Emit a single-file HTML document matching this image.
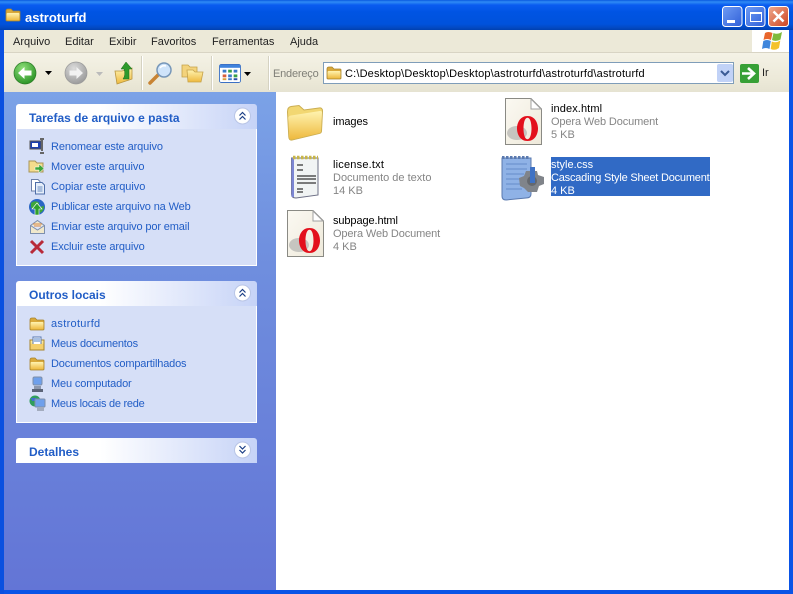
<!DOCTYPE html>
<html><head><meta charset="utf-8"><style>
html,body{margin:0;padding:0;width:793px;height:594px;overflow:hidden;background:#fff}
body{position:relative;font-family:"Liberation Sans",sans-serif;font-size:11px}
div,span{position:absolute;white-space:nowrap}
svg{position:absolute;overflow:visible}
.m{top:36px;color:#222;font-size:11px;line-height:13px}
.l{left:51px;color:#215dc6;line-height:13px;letter-spacing:-.12px}
.h{left:16px;width:241px;height:25px;background:linear-gradient(90deg,#fff 0,#fff 35%,#c6d3f7 100%);border-radius:3px 3px 0 0}
.b{left:16px;width:239px;background:#d6dff7;border:1px solid #fff;border-top:0}
.ht{left:29px;color:#215dc6;font-weight:bold;font-size:12px;line-height:14px}
.sep{width:1px;top:56px;height:34px;background:#d5d2c2;border-right:1px solid #fff}
.f{left:0;color:#000;line-height:13px}
.g{color:#858585}
</style></head><body>
<svg width="0" height="0" style="position:absolute"><defs>
<linearGradient id="fy" x1="0" y1="0" x2="0" y2="1"><stop offset="0" stop-color="#fff3b0"/><stop offset="1" stop-color="#eeb93e"/></linearGradient>
<linearGradient id="opb" x1="0" y1="0" x2="1" y2="1"><stop offset="0" stop-color="#fbf9f2"/><stop offset="1" stop-color="#eee9da"/></linearGradient>
<radialGradient id="gb" cx=".4" cy=".3" r=".8"><stop offset="0" stop-color="#8fe07a"/><stop offset="1" stop-color="#1f8a1c"/></radialGradient>
<radialGradient id="gg" cx=".4" cy=".3" r=".8"><stop offset="0" stop-color="#dcdcdc"/><stop offset="1" stop-color="#939393"/></radialGradient>
<symbol id="sf" viewBox="0 0 16 14"><path d="M1 3Q1 1 3 1H6L8 3H14Q15 3 15 4V12Q15 13 14 13H2Q1 13 1 12Z" fill="#d9a93b" stroke="#a8842c" stroke-width=".8"/><rect x="1.500" y="5" width="13" height="7.500" rx="1" fill="url(#fy)"/></symbol>
<symbol id="op" viewBox="0 0 37 47"><path d="M.5.5H26L36.5 11V46.500H.5Z" fill="url(#opb)" stroke="#8a8a84"/><path d="M26 1V11H36Z" fill="#fff" stroke="#a0a0a0"/><ellipse cx="12" cy="35" rx="10" ry="7" fill="#c6c5c0"/><path fill-rule="evenodd" d="M22.500 18C15 18 12 25 12 30.500S15 43 22.500 43S33 36 33 30.500S30 18 22.500 18ZM22.500 19.800C25.500 19.800 26.500 26 26.500 30.500S25.500 41.200 22.500 41.200S18.500 35 18.500 30.500S19.500 19.800 22.500 19.800Z" fill="#e3101c"/></symbol>
</defs></svg>

<!-- window frame -->
<div style="left:0;top:0;width:793px;height:594px;background:#0a54e6"></div>
<div style="left:0;top:0;width:793px;height:30px;background:linear-gradient(180deg,#0a5ae0 0,#2f8bf5 2px,#0a5cf0 5px,#0054e3 12px,#0052dc 24px,#0348c0 28px,#0040b0 30px)"></div>
<div style="left:0;top:30px;width:4px;height:564px;background:#0a50e0"></div>
<svg style="left:5px;top:8px" width="16" height="14"><use href="#sf" width="16" height="14"/></svg>
<div style="left:25px;top:10px;color:#fff;font-weight:bold;font-size:13px;line-height:15px">astroturfd</div>

<!-- window buttons -->
<svg style="left:722px;top:6px" width="67" height="21">
<defs><linearGradient id="wb" x1="0" y1="0" x2="1" y2="1"><stop offset="0" stop-color="#6f9cf4"/><stop offset="1" stop-color="#2f5fd8"/></linearGradient>
<linearGradient id="wr" x1="0" y1="0" x2="1" y2="1"><stop offset="0" stop-color="#eea98e"/><stop offset="1" stop-color="#cf4420"/></linearGradient></defs>
<rect x=".5" y=".5" width="19.500" height="20" rx="3" fill="url(#wb)" stroke="#fff"/>
<rect x="5" y="14" width="8" height="3" fill="#fff"/>
<rect x="23.500" y=".5" width="19.500" height="20" rx="3" fill="url(#wb)" stroke="#fff"/>
<rect x="28.500" y="6.500" width="11" height="9" fill="none" stroke="#fff"/><rect x="28" y="6" width="12" height="2" fill="#fff"/>
<rect x="46.500" y=".5" width="20" height="20" rx="3" fill="url(#wr)" stroke="#fff"/>
<path d="M51.500 5.500L61.500 15.500M61.500 5.500L51.500 15.500" stroke="#fff" stroke-width="2.500"/>
</svg>

<!-- menu bar -->
<div style="left:4px;top:30px;width:785px;height:23px;background:#ece9d8"></div>
<div style="left:4px;top:52px;width:785px;height:1px;background:#d8d4c4"></div>
<div class="m" style="left:13px">Arquivo</div>
<div class="m" style="left:65px">Editar</div>
<div class="m" style="left:109px">Exibir</div>
<div class="m" style="left:151px">Favoritos</div>
<div class="m" style="left:212px">Ferramentas</div>
<div class="m" style="left:290px">Ajuda</div>
<div style="left:752px;top:30px;width:37px;height:22px;background:#fff"></div>
<svg style="left:762px;top:31px" width="20" height="20" viewBox="0 0 20 20">
<path d="M3 2Q6 0 10.500 2L9 9Q5 7 1.500 9Z" fill="#e8662c"/><path d="M11.500 2Q15 4 20 1L18.500 8.500Q14 11 10 9Z" fill="#7fba3c"/><path d="M1.300 10Q5 8 8.800 10L7.500 18Q4 16 0 18Z" fill="#3f86dc"/><path d="M9.800 10.500Q14 12.500 18.300 9.500L17 17Q13 20 8.700 18Z" fill="#f4c22c"/>
</svg>

<!-- toolbar -->
<div style="left:4px;top:53px;width:785px;height:39px;background:linear-gradient(180deg,#f4f2e6,#ece9d8 70%,#e6e3d2)"></div>
<svg style="left:13px;top:61px" width="24" height="24" viewBox="0 0 24 24"><circle cx="12" cy="12" r="11" fill="url(#gb)" stroke="#2a7a25" stroke-width=".7"/><path d="M5 12L11.500 6V9.500H18.500V14.500H11.500V18Z" fill="#fff"/></svg>
<svg style="left:45px;top:71px" width="7" height="4"><path d="M0 0H7L3.500 4Z" fill="#000"/></svg>
<svg style="left:64px;top:61px" width="24" height="24" viewBox="0 0 24 24"><circle cx="12" cy="12" r="11" fill="url(#gg)" stroke="#999" stroke-width=".7"/><path d="M19 12L12.500 6V9.500H5.500V14.500H12.500V18Z" fill="#f2f2f2"/></svg>
<svg style="left:96px;top:72px" width="7" height="4"><path d="M0 0H7L3.500 4Z" fill="#bbb"/></svg>
<svg style="left:114px;top:61px" width="20" height="24" viewBox="0 0 20 24"><path d="M1 10H8L18 7V18L3 23Z" fill="url(#fy)" stroke="#b8953e" stroke-width=".8"/><path d="M12 1L18 8H15V18H9Q12 14 10 8H7Z" fill="#2e9a2c" stroke="#1c6b1c" stroke-width=".5"/></svg>
<div class="sep" style="left:141px"></div>
<svg style="left:148px;top:61px" width="26" height="24" viewBox="0 0 26 24"><path d="M2 22L10 14" stroke="#c88434" stroke-width="3.500" stroke-linecap="round"/><circle cx="16" cy="9" r="7" fill="#cfe4fa" stroke="#7696b8" stroke-width="1.500"/><path d="M12 7Q14 4 18 5" stroke="#fff" fill="none" stroke-width="1.500"/></svg>
<svg style="left:181px;top:62px" width="24" height="22" viewBox="0 0 24 22"><path d="M1 3H7L9 5H16V15H1Z" fill="#f3d37c" stroke="#c5a24a" stroke-width=".8"/><path d="M6 8H12L14 10H22L20 20H7Z" fill="url(#fy)" stroke="#c5a24a" stroke-width=".8"/></svg>
<div class="sep" style="left:211px"></div>
<svg style="left:219px;top:64px" width="22" height="19" viewBox="0 0 24 20" preserveAspectRatio="none"><rect x=".5" y=".5" width="23" height="19" rx="2" fill="#fff" stroke="#3b70c4"/><rect x="1" y="1" width="22" height="3" fill="#3f82dc"/><g><rect x="4" y="6" width="4" height="3" fill="#3a7ac8"/><rect x="10" y="6" width="4" height="3" fill="#3aa048"/><rect x="16" y="6" width="4" height="3" fill="#3a7ac8"/><rect x="4" y="11" width="4" height="3" fill="#d8603a"/><rect x="10" y="11" width="4" height="3" fill="#3a7ac8"/><rect x="16" y="11" width="4" height="3" fill="#3aa048"/><rect x="4" y="15" width="4" height="2" fill="#d8a03a"/><rect x="10" y="15" width="4" height="2" fill="#3a7ac8"/><rect x="16" y="15" width="4" height="2" fill="#2a50a8"/></g></svg>
<svg style="left:244px;top:72px" width="7" height="4"><path d="M0 0H7L3.500 4Z" fill="#000"/></svg>
<div class="sep" style="left:268px"></div>
<div style="left:273px;top:67px;color:#7f7f77;line-height:13px;letter-spacing:-.2px;top:68px">Endereço</div>
<div style="left:323px;top:62px;width:409px;height:20px;background:#fff;border:1px solid #7f9db9"></div>
<svg style="left:326px;top:66px" width="16" height="14"><use href="#sf" width="16" height="14"/></svg>
<div style="left:345px;top:68px;color:#000;line-height:13px;letter-spacing:.17px">C:\Desktop\Desktop\Desktop\astroturfd\astroturfd\astroturfd</div>
<svg style="left:717px;top:64px" width="16" height="18" viewBox="0 0 16 18"><rect width="16" height="18" rx="2" fill="#c1d2f7"/><path d="M4 7L8 11L12 7" stroke="#3a5a94" stroke-width="2" fill="none"/></svg>
<svg style="left:740px;top:64px" width="19" height="19" viewBox="0 0 19 19"><rect width="19" height="19" rx="2" fill="#37a036"/><path d="M2 9.500H12M8 4L14 9.500L8 15" stroke="#fff" stroke-width="2.600" fill="none"/></svg>
<div style="left:762px;top:67px;color:#222;line-height:13px">Ir</div>

<!-- sidebar -->
<div style="left:4px;top:92px;width:272px;height:498px;background:linear-gradient(180deg,#7ba2e7 0,#6f8ede 35%,#6375d6 100%)"></div>
<!-- content -->
<div style="left:276px;top:92px;width:513px;height:498px;background:#fff"></div>

<!-- panel 1 -->
<div class="h" style="top:104px"></div>
<div class="b" style="top:129px;height:136px"></div>
<div class="ht" style="top:111px">Tarefas de arquivo e pasta</div>
<svg style="left:234px;top:107px" width="17" height="18" viewBox="0 0 17 18"><circle cx="8.500" cy="9" r="8" fill="#fff" stroke="#b9c5e6"/><path d="M5.500 8.500L8.500 5.500L11.500 8.500M5.500 12.500L8.500 9.500L11.500 12.500" stroke="#1c3f86" fill="none" stroke-width="1.200"/></svg>

<svg style="left:29px;top:138px" width="18" height="17" viewBox="0 0 18 17"><rect x="1" y="3" width="11" height="8" fill="#1a3fb0" stroke="#555"/><rect x="3" y="5" width="6" height="4" fill="#fff"/><path d="M13 1V13M11 15H15M11 1H15" stroke="#666" stroke-width="2"/></svg>
<div class="l" style="top:141px">Renomear este arquivo</div>
<svg style="left:28px;top:158px" width="18" height="17" viewBox="0 0 18 17"><path d="M1 3H7L9 5H15V14H1Z" fill="#f4dc8c" stroke="#a89458"/><path d="M7 9H11V6L16 10.500L11 15V12H7Z" fill="#3ea63a" stroke="#fff" stroke-width=".5"/></svg>
<div class="l" style="top:161px;letter-spacing:0">Mover este arquivo</div>
<svg style="left:30px;top:178px" width="16" height="17" viewBox="0 0 16 17"><path d="M1.500 1.500H8L10 3.500V13H1.500Z" fill="#fff" stroke="#6b7fa8"/><path d="M5.500 4.500H12L14.500 7V16H5.500Z" fill="#e6eefa" stroke="#4f6ea8"/><path d="M7.500 9H12.500M7.500 11H12.500M7.500 13H12.500" stroke="#6b8cc0"/></svg>
<div class="l" style="top:181px;letter-spacing:-.06px">Copiar este arquivo</div>
<svg style="left:28px;top:198px" width="18" height="18" viewBox="0 0 18 18"><circle cx="9" cy="9" r="8" fill="#2a66c4"/><path d="M3 5Q7 2 10 4T8 9T3 8ZM11 9L16 8Q16 13 12 15Z" fill="#3ea63a"/><path d="M9 5L14 11H11V17H7V11H4Z" fill="#2fa02c" stroke="#fff" stroke-width=".6"/></svg>
<div class="l" style="top:201px;letter-spacing:-.14px">Publicar este arquivo na Web</div>
<svg style="left:29px;top:219px" width="17" height="16" viewBox="0 0 17 16"><path d="M1.500 6.500L8.500 1.500L15.500 6.500V14.500H1.500Z" fill="#f0e8cc" stroke="#7d8fae"/><path d="M1.500 6.500L8.500 11L15.500 6.500" fill="#dfe6f5" stroke="#7d8fae"/><path d="M4 5H13M5 7H12" stroke="#d98a4a"/></svg>
<div class="l" style="top:221px;letter-spacing:-.14px">Enviar este arquivo por email</div>
<svg style="left:29px;top:239px" width="16" height="16" viewBox="0 0 16 16"><path d="M2 2L14 14M14 2L2 14" stroke="#b82a3a" stroke-width="3"/></svg>
<div class="l" style="top:241px">Excluir este arquivo</div>

<!-- panel 2 -->
<div class="h" style="top:281px"></div>
<div class="b" style="top:306px;height:116px"></div>
<div class="ht" style="top:288px">Outros locais</div>
<svg style="left:234px;top:284px" width="17" height="18" viewBox="0 0 17 18"><circle cx="8.500" cy="9" r="8" fill="#fff" stroke="#b9c5e6"/><path d="M5.500 8.500L8.500 5.500L11.500 8.500M5.500 12.500L8.500 9.500L11.500 12.500" stroke="#1c3f86" fill="none" stroke-width="1.200"/></svg>

<svg style="left:29px;top:317px" width="16" height="14"><use href="#sf" width="16" height="14"/></svg>
<div class="l" style="top:318px;letter-spacing:.3px">astroturfd</div>
<svg style="left:29px;top:336px" width="16" height="15" viewBox="0 0 16 15"><path d="M1 4H15V14H1Z" fill="url(#fy)" stroke="#a8842c"/><rect x="4" y="1" width="8" height="8" fill="#fff" stroke="#5b7ab0"/><path d="M5 3H11M5 5H11" stroke="#4f80c8"/><rect x="1.500" y="8" width="13" height="5.500" fill="#f4cf6c"/></svg>
<div class="l" style="top:338px;letter-spacing:-.2px">Meus documentos</div>
<svg style="left:29px;top:357px" width="16" height="14"><use href="#sf" width="16" height="14"/></svg>
<div class="l" style="top:358px;letter-spacing:-.16px">Documentos compartilhados</div>
<svg style="left:31px;top:376px" width="13" height="17" viewBox="0 0 13 17"><rect x="2" y="1" width="9" height="8" rx="1.500" fill="#6fa0ec" stroke="#7f8fa8"/><rect x="3" y="10" width="7" height="6" fill="#8e98ad"/><rect x="1" y="13" width="11" height="3" fill="#5b6478"/></svg>
<div class="l" style="top:378px;letter-spacing:-.14px">Meu computador</div>
<svg style="left:29px;top:395px" width="17" height="17" viewBox="0 0 17 17"><circle cx="6" cy="6" r="5.500" fill="#2f9e5c"/><path d="M2 3H7V6H3Z" fill="#3f6fd0"/><rect x="6" y="4" width="10" height="8" rx="1" fill="#6fa0ec" stroke="#7f8fa8"/><rect x="8" y="12" width="7" height="4" fill="#a3acbe"/></svg>
<div class="l" style="top:398px;letter-spacing:-.26px">Meus locais de rede</div>

<!-- panel 3 -->
<div class="h" style="top:438px"></div>
<div class="ht" style="top:445px">Detalhes</div>
<svg style="left:234px;top:441px" width="17" height="18" viewBox="0 0 17 18"><circle cx="8.500" cy="9" r="8" fill="#fff" stroke="#b9c5e6"/><path d="M5.500 5L8.500 8L11.500 5M5.500 9L8.500 12L11.500 9" stroke="#1c3f86" fill="none" stroke-width="1.200"/></svg>

<!-- files -->
<svg style="left:286px;top:103px" width="38" height="38" viewBox="0 0 38 38"><path d="M1.500 9Q1.500 4 5 3.500L13 2.500L18 7L33 5Q36.500 4.500 36.500 8L35.500 28Q35.500 30 33 30.500L6 37Q3 37.500 2.800 34Z" fill="#f2d772" stroke="#cbae52"/><path d="M2.200 15Q2.200 13 5 12.500L34 8Q36 7.800 36 9.500L35 28Q35 30 33 30.200L6 36.500Q3.300 37 3.200 34Z" fill="url(#fy)"/></svg>
<div class="f" style="left:333px;top:116px;letter-spacing:-.1px">images</div>

<svg style="left:288px;top:154px" width="34" height="46" viewBox="0 0 34 46"><path d="M3.500 4H30V41L8 44Q3.500 44 3.500 40Z" fill="#f1f4f4" stroke="#6c6f85"/><rect x="3.500" y="4" width="2.500" height="39" fill="#7c86d4"/><path d="M5 3.500H30" stroke="#c8b648" stroke-width="3.500" stroke-dasharray="2.500 1.500"/><path d="M9 11H15M9 16H15M9 22H28M9 25H28M9 29H28M9 35H15M9 38H15" stroke="#333" stroke-width="1.300"/></svg>
<div class="f" style="left:333px;top:159px;letter-spacing:.2px">license.txt</div>
<div class="f g" style="left:333px;top:172px">Documento de texto</div>
<div class="f g" style="left:333px;top:185px">14 KB</div>

<svg style="left:287px;top:210px" width="37" height="47"><use href="#op" width="37" height="47"/></svg>
<div class="f" style="left:333px;top:215px;letter-spacing:-.1px">subpage.html</div>
<div class="f g" style="left:333px;top:228px;letter-spacing:-.12px">Opera Web Document</div>
<div class="f g" style="left:333px;top:241px">4 KB</div>

<svg style="left:505px;top:98px" width="37" height="47"><use href="#op" width="37" height="47"/></svg>
<div class="f" style="left:551px;top:103px;letter-spacing:.1px">index.html</div>
<div class="f g" style="left:551px;top:116px;letter-spacing:-.12px">Opera Web Document</div>
<div class="f g" style="left:551px;top:129px">5 KB</div>

<svg style="left:500px;top:154px" width="46" height="48" viewBox="0 0 46 48"><path d="M2 4H31V40Q31 44 26 44L6 46Q2 46 2 42Z" fill="#8fb2e6" stroke="#5878ae"/><path d="M2 3.500H30" stroke="#5a7ab0" stroke-width="3" stroke-dasharray="2.500 1.500"/><path d="M6 10H27M6 15H27M6 20H24M6 25H22M6 30H20M6 35H22" stroke="#5a80c0" stroke-width=".8"/><path d="M26 17H37L38 21L44 23V30L39 32L37 38H28L24 34L20 32L19 24L24 22Z" fill="#80848a"/><circle cx="32" cy="27" r="5" fill="#64686e"/><rect x="30" y="13" width="5" height="16" fill="#3f72c4"/></svg>
<div style="left:551px;top:157px;width:159px;height:39px;background:#316ac5"></div>
<div class="f" style="left:551px;top:159px;color:#fff">style.css</div>
<div class="f" style="left:551px;top:172px;color:#fff;letter-spacing:-.2px">Cascading Style Sheet Document</div>
<div class="f" style="left:551px;top:185px;color:#fff">4 KB</div>
</body></html>
